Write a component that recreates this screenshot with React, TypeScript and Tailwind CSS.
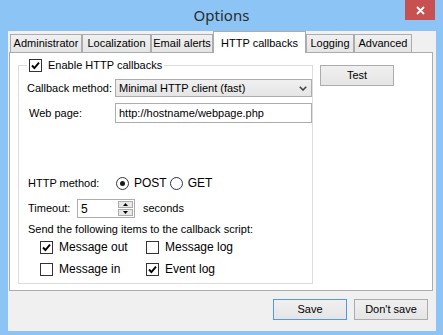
import React from "react";

const Check = ({ checked }: { checked?: boolean }) => (
  <span className="w-[13px] h-[13px] border border-[#333333] bg-white flex items-center justify-center shrink-0">
    {checked && (
      <svg width="9" height="9" viewBox="0 0 9 9">
        <path d="M1 4.5 L3.4 7 L8 1.6" stroke="#000" strokeWidth="1.9" fill="none" />
      </svg>
    )}
  </span>
);

const Radio = ({ checked }: { checked?: boolean }) => (
  <span className="w-[13px] h-[13px] rounded-full border border-[#333333] bg-white flex items-center justify-center shrink-0">
    {checked && <span className="w-[5px] h-[5px] rounded-full bg-[#1a1a1a]" />}
  </span>
);

const tabs = [
  { label: "Administrator", w: "w-[72px]" },
  { label: "Localization", w: "w-[69px]" },
  { label: "Email alerts", w: "w-[62px]" },
  { label: "HTTP callbacks", w: "w-[93px]", active: true },
  { label: "Logging", w: "w-[48px]" },
  { label: "Advanced", w: "w-[58px]" },
];

const items = [
  [{ label: "Message out", checked: true }, { label: "Message log" }],
  [{ label: "Message in" }, { label: "Event log", checked: true }],
];

export default function App() {
  return (
    <div className="w-[443px] h-[335px] bg-[#8cc5f5] flex flex-col font-['Liberation_Sans',Arial,sans-serif] text-[11px] text-black overflow-hidden">
      {/* title bar */}
      <div className="relative h-[31px] flex items-center justify-center">
        <span className="font-['Noto_Sans',sans-serif] text-[15px] leading-none text-[#2b2b2b] -mt-[1px]">Options</span>
        <div className="absolute top-0 right-[8px] w-[30px] h-[20px] bg-[#c75050] flex items-center justify-center">
          <svg width="9" height="9" viewBox="0 0 9 9">
            <path d="M1 1 L8 8 M8 1 L1 8" stroke="#fff" strokeWidth="1.8" />
          </svg>
        </div>
      </div>

      {/* client */}
      <div className="ml-[8px] w-[428px] h-[300px] bg-[#f0f0f0] flex flex-col">
        <div className="h-[21px] flex items-end pl-[2px] relative z-10">
          {tabs.map((t) =>
            t.active ? (
              <div
                key={t.label}
                className={`${t.w} h-[22px] -mb-[1px] bg-white border border-b-0 border-[#acacac] flex items-start justify-center pt-[3px]`}
              >
                {t.label}
              </div>
            ) : (
              <div
                key={t.label}
                className={`${t.w} h-[18px] bg-gradient-to-b from-[#f0f0f0] to-[#e5e5e5] border border-b-0 border-[#acacac] flex items-center justify-center`}
              >
                {t.label}
              </div>
            )
          )}
        </div>

        <div className="ml-[1px] w-[424px] h-[239px] bg-white border border-[#acacac] flex items-start">
          {/* group box */}
          <div className="relative ml-[8px] mt-[12px] w-[295px] h-[219px] border border-[#dcdcdc] flex flex-col pl-[8px]">
            <div className="absolute -top-[7px] left-[8px] bg-white px-[2px] flex items-center gap-[6px] h-[13px]">
              <Check checked />
              <span>Enable HTTP callbacks</span>
            </div>

            <div className="mt-[13px] flex items-center h-[18px]">
              <span className="w-[88px]">Callback method:</span>
              <div className="w-[197px] h-[18px] border border-[#acacac] bg-gradient-to-b from-[#f0f0f0] to-[#e5e5e5] flex items-center justify-between pl-[3px] pr-[4px]">
                <span>Minimal HTTP client (fast)</span>
                <svg width="8" height="5" viewBox="0 0 8 5">
                  <path d="M0.8 0.8 L4 4 L7.2 0.8" stroke="#444" strokeWidth="1.6" fill="none" />
                </svg>
              </div>
            </div>

            <div className="mt-[6px] flex items-center h-[20px]">
              <span className="w-[88px] pl-[2px]">Web page:</span>
              <div className="w-[197px] h-[20px] border border-[#abadb3] bg-white flex items-center pl-[3px]">
                http://hostname/webpage.php
              </div>
            </div>

            <div className="mt-[52px] flex items-center h-[16px] pl-[1px]">
              <span className="w-[88px]">HTTP method:</span>
              <Radio checked />
              <span className="ml-[5px] text-[12px]">POST</span>
              <span className="ml-[3px]">
                <Radio />
              </span>
              <span className="ml-[5px] text-[12px]">GET</span>
            </div>

            <div className="mt-[8px] flex items-center h-[19px] pl-[1px]">
              <span className="w-[49px]">Timeout:</span>
              <div className="w-[58px] h-[19px] border border-[#abadb3] bg-white flex items-center justify-between pl-[3px] pr-[1px]">
                <span className="text-[12px]">5</span>
                <div className="w-[15px] h-[15px] flex flex-col gap-[1px]">
                  <div className="flex-1 border border-[#acacac] bg-[#e8e8e8] flex items-center justify-center">
                    <svg width="5" height="3" viewBox="0 0 5 3"><path d="M0 3 L2.5 0 L5 3 Z" fill="#000" /></svg>
                  </div>
                  <div className="flex-1 border border-[#acacac] bg-[#e8e8e8] flex items-center justify-center">
                    <svg width="5" height="3" viewBox="0 0 5 3"><path d="M0 0 L2.5 3 L5 0 Z" fill="#000" /></svg>
                  </div>
                </div>
              </div>
              <span className="ml-[8px]">seconds</span>
            </div>

            <div className="mt-[5px] h-[13px] flex items-center pl-[1px]">
              Send the following items to the callback script:
            </div>

            <div className="mt-[4px] flex flex-col gap-[8px] pl-[13px]">
              {items.map((row, i) => (
                <div key={i} className="flex items-center h-[14px]">
                  {row.map((it) => (
                    <div key={it.label} className="w-[106px] flex items-center gap-[6px]">
                      <Check checked={it.checked} />
                      <span className="text-[12px]">{it.label}</span>
                    </div>
                  ))}
                </div>
              ))}
            </div>
          </div>

          <button className="ml-[7px] mt-[12px] w-[74px] h-[21px] border border-[#acacac] bg-gradient-to-b from-[#f0f0f0] to-[#e5e5e5] flex items-center justify-center">
            Test
          </button>
        </div>

        <div className="flex justify-end gap-[7px] pr-[8px] mt-[8px]">
          <button className="w-[74px] h-[21px] border border-[#4f9be6] bg-gradient-to-b from-[#f0f0f0] to-[#e5e5e5] flex items-center justify-center">
            Save
          </button>
          <button className="w-[74px] h-[21px] border border-[#acacac] bg-gradient-to-b from-[#f0f0f0] to-[#e5e5e5] flex items-center justify-center">
            Don't save
          </button>
        </div>
      </div>
    </div>
  );
}
